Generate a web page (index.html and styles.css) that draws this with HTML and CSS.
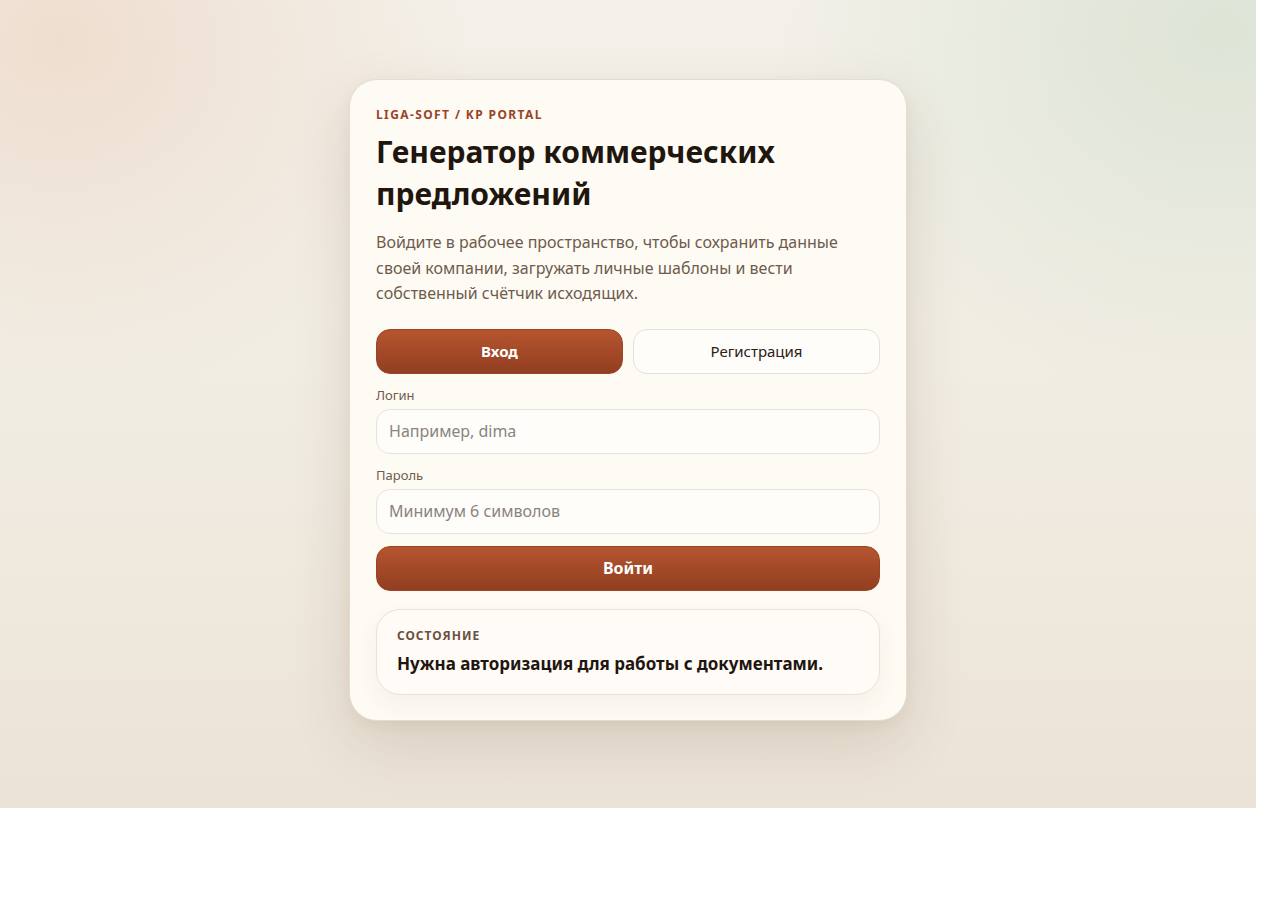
FILE: index.html
```html
<!DOCTYPE html>
<html lang="ru">
<head>
    <meta charset="UTF-8">
    <meta name="viewport" content="width=device-width, initial-scale=1.0">
    <title>Генератор коммерческих предложений</title>
    <link rel="stylesheet" href="styles.css">
</head>
<body>
    <div class="page">
        <main class="auth-card">
            <div class="eyebrow">Liga-Soft / KP Portal</div>
            <h1>Генератор коммерческих предложений</h1>
            <p class="lead">Войдите в рабочее пространство, чтобы сохранить данные своей компании, загружать личные шаблоны и вести собственный счётчик исходящих.</p>

            <div class="tabs">
                <button type="button" class="tab tab-active">Вход</button>
                <button type="button" class="tab">Регистрация</button>
            </div>

            <form class="auth-form" id="loginForm">
                <label class="field">
                    <span class="field-label">Логин</span>
                    <input type="text" name="login" placeholder="Например, dima">
                </label>
                <label class="field">
                    <span class="field-label">Пароль</span>
                    <input type="password" name="password" placeholder="Минимум 6 символов">
                </label>
                <button type="submit" class="submit">Войти</button>
            </form>

            <div class="status">
                <div class="status-title">Состояние</div>
                <div class="status-text">Нужна авторизация для работы с документами.</div>
            </div>
        </main>
    </div>
</body>
</html>
```

FILE: styles.css
```css
/* Base */
body {
    margin: 0;
    background: #fff;
    font-family: "Noto Sans", "Open Sans", sans-serif;
    color: #1f1610;
}

.page {
    width: 1256px;
    height: 808px;
    box-sizing: border-box;
    padding-top: 79px;
    display: flex;
    justify-content: center;
    align-items: flex-start;
    background:
        radial-gradient(ellipse 420px 360px at 60px 40px, rgba(238, 220, 205, 0.9), rgba(238, 220, 205, 0) 100%),
        radial-gradient(ellipse 460px 380px at 1220px 30px, rgba(221, 228, 214, 1), rgba(221, 228, 214, 0) 100%),
        linear-gradient(180deg, #f4f1ea 0%, #f1ede3 45%, #ece3d7 100%);
}

/* Card */
.auth-card {
    width: 558px;
    box-sizing: border-box;
    padding: 27px 26px 25px;
    background: #fefbf4;
    border: 1px solid #e4ddd0;
    border-radius: 28px;
    box-shadow: 0 24px 60px rgba(90, 60, 30, 0.14), 0 4px 14px rgba(90, 60, 30, 0.05);
}

.eyebrow {
    font-size: 12px;
    font-weight: 700;
    letter-spacing: 1.4px;
    text-transform: uppercase;
    color: #9a4428;
    line-height: 16px;
}

h1 {
    margin: 8px 0 0;
    font-size: 30px;
    line-height: 42px;
    font-weight: 700;
    color: #20160e;
}

.lead {
    margin: 15px 0 0;
    font-size: 16px;
    line-height: 25.5px;
    color: #6e5b4d;
}

/* Tabs */
.tabs {
    margin-top: 22px;
    display: grid;
    grid-template-columns: 1fr 1fr;
    gap: 10px;
}

.tab {
    height: 45px;
    border-radius: 14px;
    border: 1px solid #e6e0d8;
    background: #fffdf9;
    color: #2a2018;
    font-family: inherit;
    font-size: 15px;
    cursor: pointer;
}

.tab-active,
.submit {
    background: linear-gradient(180deg, #b5552f 0%, #923e21 100%);
    border: 1px solid #9c4526;
    color: #fff;
    font-weight: 700;
}

/* Form */
.auth-form {
    margin-top: 12px;
    display: flex;
    flex-direction: column;
}

.field {
    display: flex;
    flex-direction: column;
    margin-bottom: 12px;
}

.field-label {
    font-size: 13px;
    line-height: 18px;
    color: #6e5b4d;
    margin-bottom: 5px;
}

.field input {
    height: 45px;
    box-sizing: border-box;
    padding: 0 12px;
    border: 1px solid #e8e2da;
    border-radius: 14px;
    background: #fffdf9;
    font-family: inherit;
    font-size: 16px;
    color: #2a2018;
    outline: none;
}

.field input::placeholder {
    color: #8a8380;
}

.submit {
    height: 45px;
    border-radius: 14px;
    font-family: inherit;
    font-size: 16px;
    cursor: pointer;
}

/* Status */
.status {
    margin-top: 18px;
    padding: 18px 20px 19px;
    border: 1px solid #e8e2da;
    border-radius: 24px;
    background: #fffcf7;
    box-shadow: 0 10px 24px rgba(90, 60, 30, 0.05);
}

.status-title {
    font-size: 12px;
    font-weight: 700;
    letter-spacing: 1px;
    text-transform: uppercase;
    color: #6b5040;
    line-height: 16px;
}

.status-text {
    margin-top: 9px;
    font-size: 17px;
    font-weight: 700;
    line-height: 22px;
    color: #1f1610;
}
```
